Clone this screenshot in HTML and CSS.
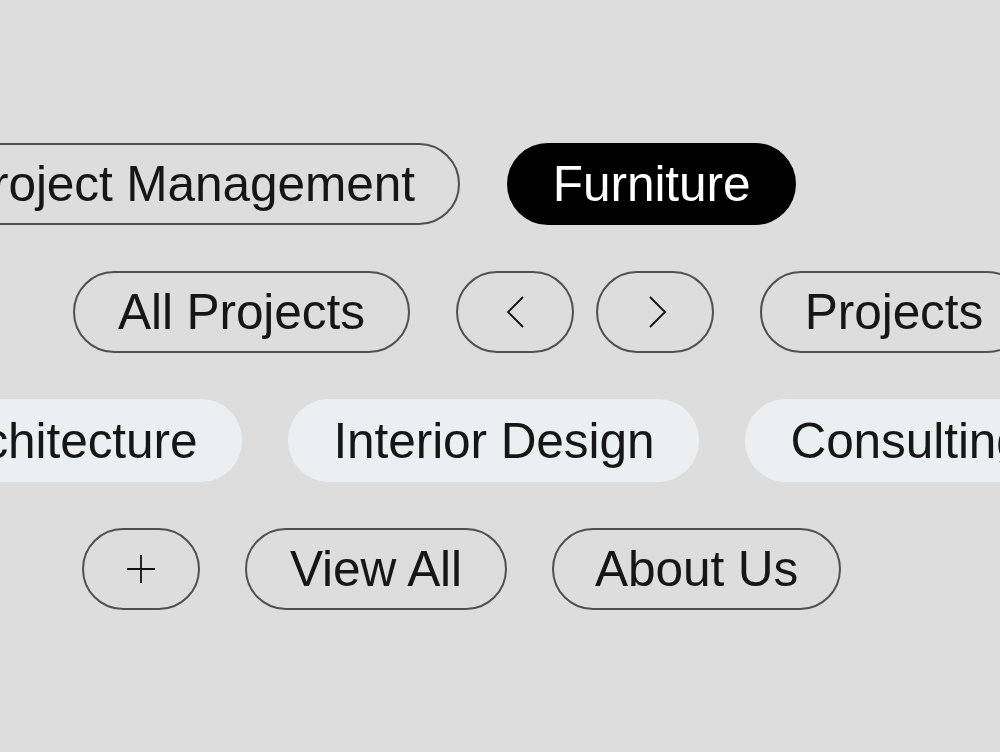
FILE: index.html
```html
<!DOCTYPE html>
<html lang="en">
<head>
<meta charset="utf-8">
<title>Tags</title>
<link rel="stylesheet" href="styles.css">
</head>
<body>
<main class="stage">
  <div class="row row-1">
    <span class="pill outline">Project Management</span>
    <span class="pill solid">Furniture</span>
  </div>
  <div class="row row-2">
    <span class="pill outline">All Projects</span>
    <div class="pair">
      <span class="pill outline icon" aria-label="Previous">
        <svg width="30" height="32" viewBox="0 0 30 32"><path d="M23 1 L8 16 L23 31" fill="none" stroke="#111" stroke-width="1.8"/></svg>
      </span>
      <span class="pill outline icon" aria-label="Next">
        <svg width="30" height="32" viewBox="0 0 30 32"><path d="M10 1 L25 16 L10 31" fill="none" stroke="#111" stroke-width="1.8"/></svg>
      </span>
    </div>
    <span class="pill outline">Projects</span>
  </div>
  <div class="row row-3">
    <span class="pill soft">Architecture</span>
    <span class="pill soft">Interior Design</span>
    <span class="pill soft">Consulting</span>
  </div>
  <div class="row row-4">
    <span class="pill outline icon" aria-label="Add">
      <svg width="32" height="32" viewBox="0 0 32 32"><path d="M16 2 V30 M2 16 H30" fill="none" stroke="#111" stroke-width="1.8"/></svg>
    </span>
    <span class="pill outline">View All</span>
    <span class="pill outline">About Us</span>
  </div>
</main>
</body>
</html>
```

FILE: styles.css
```css
html, body {
  margin: 0;
  padding: 0;
  background: #dddddd;
  overflow: hidden;
  width: 1000px;
  height: 752px;
}

.stage {
  display: flex;
  flex-direction: column;
  gap: 46px;
  padding-top: 143px;
  font-family: "Liberation Sans", Arial, sans-serif;
  font-size: 49.6px;
  color: #161616;
}

.row {
  display: flex;
  gap: 46px;
  white-space: nowrap;
}

.row-1 { margin-left: -86px; gap: 47px; }
.row-2 { margin-left: 73px; gap: 46px; }
.row-3 { margin-left: -111px; gap: 46px; }
.row-4 { margin-left: 82px; gap: 45px; }

.pair {
  display: flex;
  gap: 22px;
}

.pill {
  box-sizing: border-box;
  height: 82px;
  border-radius: 41px;
  padding: 0 45px;
  display: flex;
  align-items: center;
  justify-content: center;
  flex: none;
  letter-spacing: -0.1px;
}

.outline {
  border: 2px solid #505050;
  padding: 0 43px;
}

.solid {
  background: #000000;
  color: #ffffff;
  padding: 0 46px;
}

.soft {
  background: #eceff2;
  height: 83px;
}

.row-4 .outline:last-child {
  padding: 0 41px;
}

.icon {
  width: 118px;
  padding: 0;
}

.icon svg {
  display: block;
}
```
